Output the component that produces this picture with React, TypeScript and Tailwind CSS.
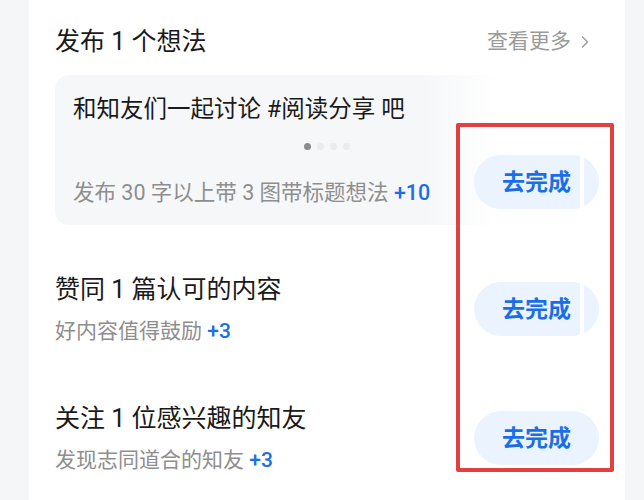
const font = { fontFamily: '"Roboto", "Noto Sans CJK SC", sans-serif' };

type Task = {
  title: string;
  desc: string;
  reward: string;
  cut?: boolean;
};

const tasks: Task[] = [
  { title: "赞同 1 篇认可的内容", desc: "好内容值得鼓励", reward: "+3", cut: true },
  { title: "关注 1 位感兴趣的知友", desc: "发现志同道合的知友", reward: "+3" },
];

const DoButton = ({ cut }: { cut?: boolean }) => (
  <button className="relative w-[125px] h-[54px] shrink-0 rounded-full bg-[#ebf3fe] text-[#1a6fe8] text-[23px] font-bold leading-none">
    去完成
    {cut && (
      <span className="absolute top-0 left-[106px] w-[4px] h-full bg-white/90" />
    )}
  </button>
);

const App = () => {
  return (
    <div
      className="relative w-[644px] h-[500px] overflow-hidden bg-[#f5f6f7]"
      style={font}
    >
      <div className="ml-[29px] w-[596px] h-full bg-white pl-[26px] pr-[26px]">
        {/* header */}
        <div className="flex items-center justify-between pt-[25px] pr-[9px]">
          <h2 className="text-[25px] leading-[34px] text-[#1a1a1a]">发布 1 个想法</h2>
          <span className="flex items-center gap-[9px] text-[21px] text-[#9a9a9a]">
            查看更多
            <svg width="10" height="16" viewBox="0 0 10 16" fill="none">
              <path d="M2.5 3 L7.5 8 L2.5 13" stroke="#9a9a9a" strokeWidth="1.4" strokeLinecap="round" strokeLinejoin="round" />
            </svg>
          </span>
        </div>

        {/* idea card */}
        <div className="mt-[16px] rounded-[14px] bg-[linear-gradient(90deg,#f6f7f9_0%,#f6f7f9_68%,#ffffff_82%)] pt-[18px] pb-[16px]">
          <p className="pl-[18px] text-[23.5px] leading-[32px] text-[#1a1a1a]">
            和知友们一起讨论 #阅读分享 吧
          </p>
          <div className="mt-[18px] flex justify-center gap-[6px]">
            <span className="w-[7px] h-[7px] rounded-full bg-[#8c8c8c]" />
            <span className="w-[7px] h-[7px] rounded-full bg-[#ececec]" />
            <span className="w-[7px] h-[7px] rounded-full bg-[#ececec]" />
            <span className="w-[7px] h-[7px] rounded-full bg-[#ececec]" />
          </div>
          <div className="mt-[5px] flex items-end justify-between">
            <p className="pl-[18px] mb-[2px] text-[21.5px] leading-[28px] text-[#8e8e8e]">
              发布 30 字以上带 3 图带标题想法{" "}
              <span className="font-medium text-[#1a6fe8]">+10</span>
            </p>
            <DoButton cut />
          </div>
        </div>

        {/* other tasks */}
        <div className="flex flex-col">
          {tasks.map((t, i) => (
            <div
              key={t.title}
              className={`flex items-center justify-between ${i === 0 ? "pt-[48px]" : "pt-[57px]"}`}
            >
              <div className="flex flex-col gap-[10px]">
                <p className="text-[25px] leading-[34px] text-[#1a1a1a]">{t.title}</p>
                <p className="text-[21px] leading-[28px] text-[#8e8e8e]">
                  {t.desc}{" "}
                  <span className="font-medium text-[#1a6fe8]">{t.reward}</span>
                </p>
              </div>
              <DoButton cut={t.cut} />
            </div>
          ))}
        </div>
      </div>

      {/* annotation box */}
      <div className="absolute left-[456px] top-[123px] w-[158px] h-[349px] border-[4px] border-[#e0403f] rounded-[2px]" />
    </div>
  );
};

export default App;
